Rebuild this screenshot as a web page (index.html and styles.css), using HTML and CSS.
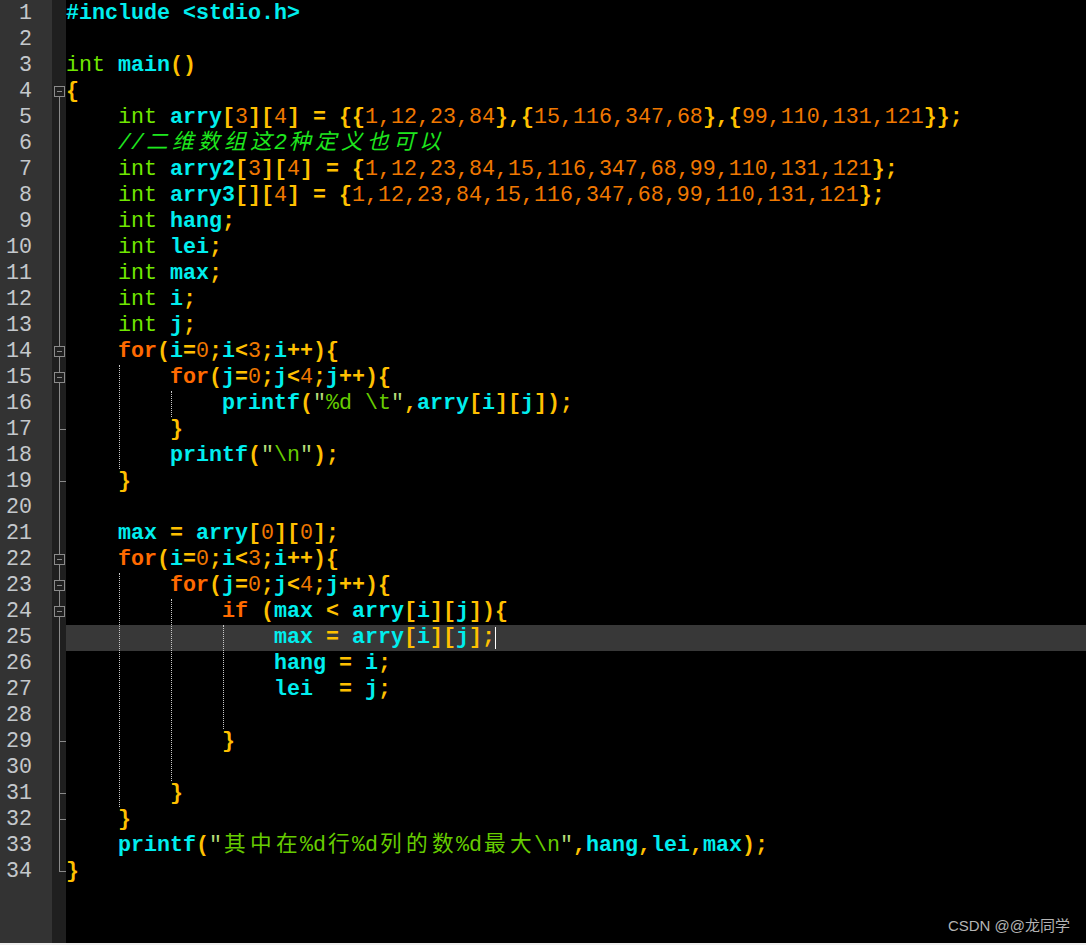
FILE: index.html
```html
<!DOCTYPE html>
<html lang="zh-CN">
<head>
    <meta charset="UTF-8">
    <meta name="viewport" content="width=device-width, initial-scale=1.0">
    <title>main.c</title>
    <link rel="stylesheet" href="styles.css">
</head>
<body>
    <div class="editor">
        <!-- line numbers -->
        <div class="nums">
            <div>1</div><div>2</div><div>3</div><div>4</div><div>5</div><div>6</div><div>7</div>
            <div>8</div><div>9</div><div>10</div><div>11</div><div>12</div><div>13</div><div>14</div>
            <div>15</div><div>16</div><div>17</div><div>18</div><div>19</div><div>20</div><div>21</div>
            <div>22</div><div>23</div><div>24</div><div>25</div><div>26</div><div>27</div><div>28</div>
            <div>29</div><div>30</div><div>31</div><div>32</div><div>33</div><div>34</div>
        </div>

        <!-- fold margin -->
        <div class="fold">
            <div class="f"></div>
            <div class="f"></div>
            <div class="f"></div>
            <div class="f start box"></div>
            <div class="f bar"></div>
            <div class="f bar"></div>
            <div class="f bar"></div>
            <div class="f bar"></div>
            <div class="f bar"></div>
            <div class="f bar"></div>
            <div class="f bar"></div>
            <div class="f bar"></div>
            <div class="f bar"></div>
            <div class="f bar box"></div>
            <div class="f bar box"></div>
            <div class="f bar"></div>
            <div class="f bar tick"></div>
            <div class="f bar"></div>
            <div class="f bar tick"></div>
            <div class="f bar"></div>
            <div class="f bar"></div>
            <div class="f bar box"></div>
            <div class="f bar box"></div>
            <div class="f bar box"></div>
            <div class="f bar"></div>
            <div class="f bar"></div>
            <div class="f bar"></div>
            <div class="f bar"></div>
            <div class="f bar tick"></div>
            <div class="f bar"></div>
            <div class="f bar tick"></div>
            <div class="f bar tick"></div>
            <div class="f bar"></div>
            <div class="f end"></div>
        </div>

        <!-- source -->
        <div class="code">
<div class="ln"><span class="i">#include &lt;stdio.h&gt;</span></div>
<div class="ln"></div>
<div class="ln"><span class="k">int</span> <span class="i">main</span>()</div>
<div class="ln">{</div>
<div class="ln">    <span class="k">int</span> <span class="i">arry</span>[<span class="n">3</span>][<span class="n">4</span>] = {{<span class="n">1,12,23,84</span>},{<span class="n">15,116,347,68</span>},{<span class="n">99,110,131,121</span>}};</div>
<div class="ln">    <span class="c">//<span class="z">二维数组这</span>2<span class="z">种定义也可以</span></span></div>
<div class="ln">    <span class="k">int</span> <span class="i">arry2</span>[<span class="n">3</span>][<span class="n">4</span>] = {<span class="n">1,12,23,84,15,116,347,68,99,110,131,121</span>};</div>
<div class="ln">    <span class="k">int</span> <span class="i">arry3</span>[][<span class="n">4</span>] = {<span class="n">1,12,23,84,15,116,347,68,99,110,131,121</span>};</div>
<div class="ln">    <span class="k">int</span> <span class="i">hang</span>;</div>
<div class="ln">    <span class="k">int</span> <span class="i">lei</span>;</div>
<div class="ln">    <span class="k">int</span> <span class="i">max</span>;</div>
<div class="ln">    <span class="k">int</span> <span class="i">i</span>;</div>
<div class="ln">    <span class="k">int</span> <span class="i">j</span>;</div>
<div class="ln">    <span class="w">for</span>(<span class="i">i</span>=<span class="n">0</span>;<span class="i">i</span>&lt;<span class="n">3</span>;<span class="i">i</span>++){</div>
<div class="ln">        <span class="w">for</span>(<span class="i">j</span>=<span class="n">0</span>;<span class="i">j</span>&lt;<span class="n">4</span>;<span class="i">j</span>++){</div>
<div class="ln">            <span class="i">printf</span>(<span class="s"><span class="q">"</span>%d \t<span class="q">"</span></span>,<span class="i">arry</span>[<span class="i">i</span>][<span class="i">j</span>]);</div>
<div class="ln">        }</div>
<div class="ln">        <span class="i">printf</span>(<span class="s"><span class="q">"</span>\n<span class="q">"</span></span>);</div>
<div class="ln">    }</div>
<div class="ln"></div>
<div class="ln">    <span class="i">max</span> = <span class="i">arry</span>[<span class="n">0</span>][<span class="n">0</span>];</div>
<div class="ln">    <span class="w">for</span>(<span class="i">i</span>=<span class="n">0</span>;<span class="i">i</span>&lt;<span class="n">3</span>;<span class="i">i</span>++){</div>
<div class="ln">        <span class="w">for</span>(<span class="i">j</span>=<span class="n">0</span>;<span class="i">j</span>&lt;<span class="n">4</span>;<span class="i">j</span>++){</div>
<div class="ln">            <span class="w">if</span> (<span class="i">max</span> &lt; <span class="i">arry</span>[<span class="i">i</span>][<span class="i">j</span>]){</div>
<div class="ln cur">                <span class="i">max</span> = <span class="i">arry</span>[<span class="i">i</span>][<span class="i">j</span>];<span class="caret"></span></div>
<div class="ln">                <span class="i">hang</span> = <span class="i">i</span>;</div>
<div class="ln">                <span class="i">lei</span>  = <span class="i">j</span>;</div>
<div class="ln"></div>
<div class="ln">            }</div>
<div class="ln"></div>
<div class="ln">        }</div>
<div class="ln">    }</div>
<div class="ln">    <span class="i">printf</span>(<span class="s"><span class="q">"</span><span class="z">其中在</span>%d<span class="z">行</span>%d<span class="z">列的数</span>%d<span class="z">最大</span>\n<span class="q">"</span></span>,<span class="i">hang</span>,<span class="i">lei</span>,<span class="i">max</span>);</div>
<div class="ln">}</div>

            <!-- indent guides -->
            <div class="guide g1"></div>
            <div class="guide g2"></div>
            <div class="guide g3"></div>
            <div class="guide g4"></div>
            <div class="guide g5"></div>
        </div>

        <div class="mark">CSDN @@龙同学</div>
    </div>
</body>
</html>
```

FILE: styles.css
```css
:root {
    --bg: #000000;
    --gutter: #333333;
    --fold: #1f1f1f;
    --fold-line: #8a8a8a;
    --op: #ffc000;
    --ident: #00eeee;
    --type: #70e800;
    --num: #f07800;
    --kw: #ff6a00;
    --comment: #1ee61e;
    --string: #66cc00;
    --mono: 'Liberation Mono', 'Noto Sans CJK SC', monospace;
}

body {
    margin: 0;
    padding: 0;
    background: #eeeeee;
}

.editor {
    display: flex;
    height: 943px;
    background: var(--bg);
    position: relative;
    overflow: hidden;
    font-family: var(--mono);
    font-size: 21.66px;
}

.nums {
    width: 52px;
    flex: none;
    background: var(--gutter);
    color: #c4c8cc;
    text-align: right;
    padding-right: 20px;
    box-sizing: border-box;
    padding-top: 1px;
}

.nums div {
    height: 26px;
    line-height: 26px;
}

.fold {
    width: 14px;
    flex: none;
    background: var(--fold);
}

.f {
    height: 26px;
    position: relative;
}

.bar::before,
.start::before,
.end::before {
    content: '';
    position: absolute;
    left: 7px;
    top: 0;
    bottom: 0;
    width: 1px;
    background: var(--fold-line);
}

.start::before {
    top: 13px;
}

.end::before {
    bottom: 13px;
}

.tick::after,
.end::after {
    content: '';
    position: absolute;
    left: 7px;
    right: 0;
    top: 13px;
    height: 1px;
    background: var(--fold-line);
}

.box::after {
    content: '';
    position: absolute;
    left: 2px;
    top: 8px;
    width: 9px;
    height: 9px;
    border: 1px solid var(--fold-line);
    background: linear-gradient(var(--fold-line), var(--fold-line)) center / 5px 1px no-repeat, var(--fold);
}

.code {
    flex: 1;
    position: relative;
    padding-top: 1px;
}

.ln {
    height: 26px;
    line-height: 26px;
    white-space: pre;
    color: var(--op);
    font-weight: bold;
}

.ln.cur {
    background: #383838;
}

.i {
    color: var(--ident);
}

.k {
    color: var(--type);
    font-weight: normal;
}

.n {
    color: var(--num);
    font-weight: normal;
}

.w {
    color: var(--kw);
}

.c {
    color: var(--comment);
    font-weight: normal;
    font-style: italic;
}

.s {
    color: var(--string);
    font-weight: normal;
}

.q {
    color: #b4dc78;
}

/* CJK glyphs take two columns, centred in the cell */
.z {
    letter-spacing: 4.34px;
    padding-left: 2px;
    margin-right: -2px;
}

.caret {
    display: inline-block;
    width: 0;
    height: 22px;
    border-left: 1px solid #ffffff;
    vertical-align: top;
    margin-top: 2px;
}

.guide {
    position: absolute;
    width: 0;
    border-left: 1px dotted #c8c8c8;
}

.g1 { left: 53px; top: 365px; height: 104px; }
.g2 { left: 105px; top: 391px; height: 26px; }
.g3 { left: 53px; top: 573px; height: 234px; }
.g4 { left: 105px; top: 599px; height: 182px; }
.g5 { left: 157px; top: 625px; height: 104px; }

.mark {
    position: absolute;
    right: 16px;
    bottom: 8px;
    color: #b4b4b4;
    font-family: 'Liberation Sans', 'Noto Sans CJK SC', sans-serif;
    font-size: 15px;
    font-weight: normal;
}
```
